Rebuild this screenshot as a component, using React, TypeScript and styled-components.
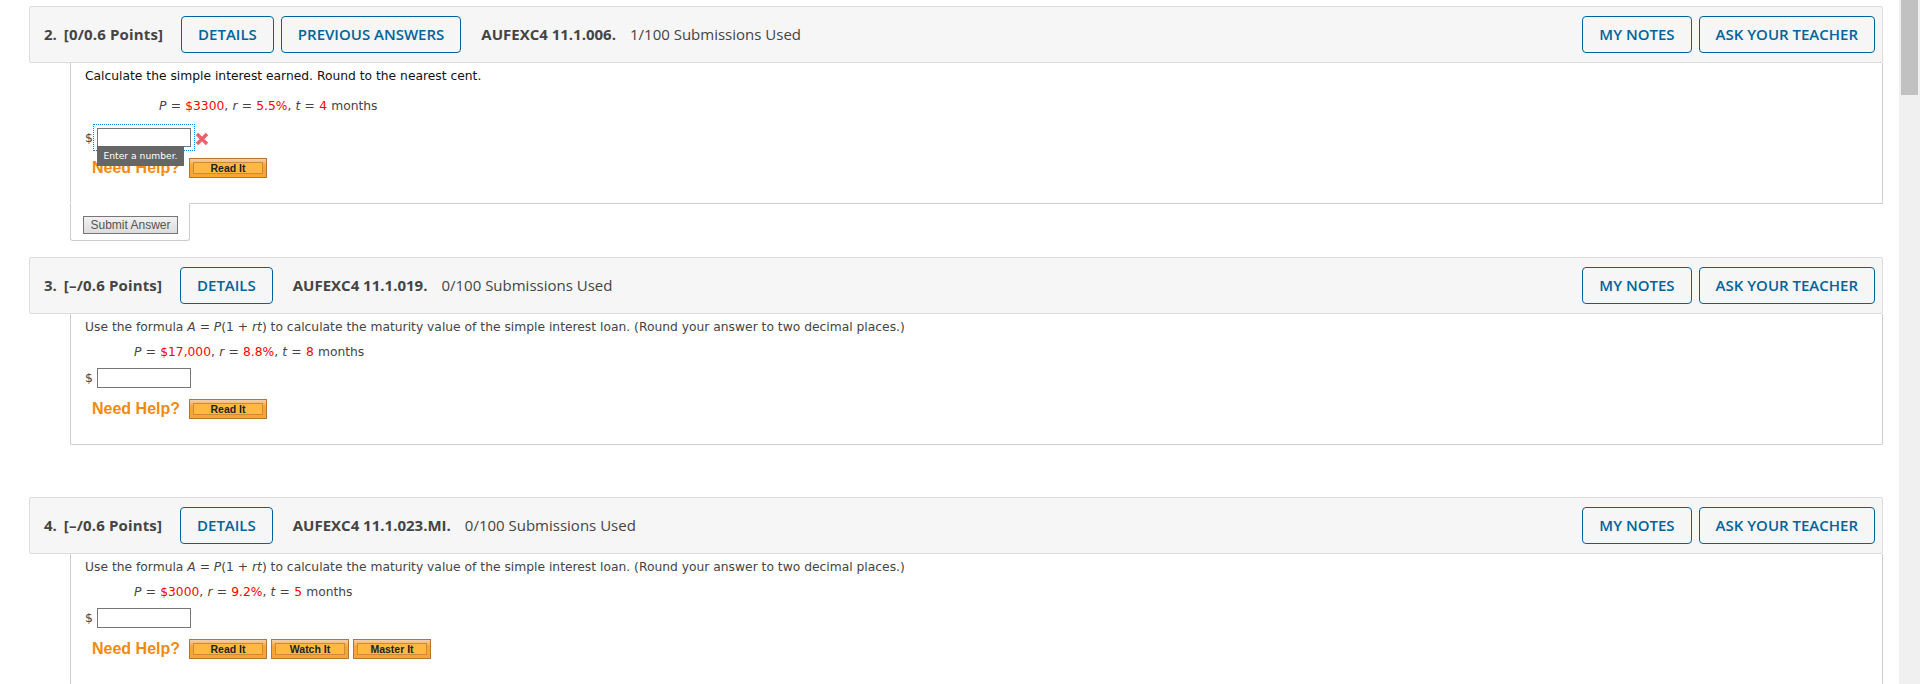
import styled, { createGlobalStyle } from "styled-components";

const GlobalStyle = createGlobalStyle`
  html, body {
    margin: 0;
    padding: 0;
    background: #fff;
    overflow: hidden;
  }
`;

const Page = styled.div`
  display: flex;
  height: 684px;
  overflow: hidden;
`;

const Main = styled.main`
  width: 1899px;
  padding: 6px 16px 0 29px;
  box-sizing: border-box;
`;

const Rail = styled.div`
  width: 21px;
  height: 684px;
  padding: 0 2px;
  box-sizing: border-box;
  background: #f0f0f0;
`;

const Thumb = styled.div`
  height: 95px;
  background: #c1c1c1;
`;

const Section = styled.section<{ $gap: number }>`
  margin-bottom: ${(p) => p.$gap}px;
`;

const Header = styled.header`
  display: flex;
  align-items: center;
  height: 57px;
  padding: 0 7px 0 14px;
  box-sizing: border-box;
  background: #f6f6f6;
  border: 1px solid #ddd;
  border-radius: 2px;
  font-family: "Open Sans", sans-serif;
  font-size: 15px;
  color: #444;
`;

const Num = styled.span`
  font-weight: 700;
  margin-right: 7px;
  padding-bottom: 2px;
`;

const Points = styled.span`
  font-weight: 700;
  margin-right: 8px;
  padding-bottom: 2px;
  letter-spacing: 0.15px;
`;

const HeadButton = styled.button`
  height: 37px;
  margin-left: 10px;
  padding: 0 16px 2px;
  background: transparent;
  border: 1px solid #00639c;
  border-radius: 4px;
  font-family: "Open Sans", sans-serif;
  font-size: 15px;
  font-weight: 600;
  color: #00639c;
  white-space: nowrap;

  & + & {
    margin-left: 7px;
  }
`;

const Code = styled.span`
  font-weight: 700;
  margin-left: 20px;
  padding-bottom: 2px;
`;

const Used = styled.span`
  margin-left: 14px;
  padding-bottom: 2px;
`;

const HeadRight = styled.div`
  display: flex;
  margin-left: auto;

  ${HeadButton} {
    margin-left: 0;
  }

  ${HeadButton} + ${HeadButton} {
    margin-left: 7px;
  }
`;

const Body = styled.div<{ $open: boolean }>`
  margin-left: 41px;
  padding: 5px 14px 25px;
  border: 1px solid #ccc;
  border-top: none;
  border-bottom: ${(p) => (p.$open ? "none" : "1px solid #ccc")};
  border-radius: 0 0 2px 2px;
  font-family: "DejaVu Sans", sans-serif;
  font-size: 12.3px;
  line-height: 16px;
  color: #444;
`;

const Prompt = styled.div<{ $dark: boolean }>`
  color: ${(p) => (p.$dark ? "#111" : "#444")};
`;

const Formula = styled.div<{ $compact: boolean }>`
  margin-top: ${(p) => (p.$compact ? 14 : 9)}px;
  padding-left: ${(p) => (p.$compact ? 74 : 49)}px;
  word-spacing: 0.3px;
`;

const Var = styled.i`
  font-style: italic;
`;

const Given = styled.span`
  color: #f00;
`;

const AnswerRow = styled.div<{ $compact: boolean }>`
  display: flex;
  align-items: center;
  margin-top: ${(p) => (p.$compact ? 14 : 8)}px;
`;

const Dollar = styled.span`
  width: 12px;
`;

const InputWrap = styled.div`
  position: relative;
  display: flex;
`;

const Input = styled.input<{ $focused: boolean; $compact: boolean }>`
  width: 94px;
  height: ${(p) => (p.$compact ? 19 : 20)}px;
  padding: 0;
  box-sizing: border-box;
  background: #fff;
  border: 1px solid #767676;
  outline: ${(p) => (p.$focused ? "1px dotted #0a84ff" : "none")};
  outline-offset: 3px;
`;

const Tooltip = styled.div`
  position: absolute;
  left: 0;
  top: 18px;
  width: 87px;
  height: 20px;
  background: #666;
  color: #fff;
  font-size: 9.2px;
  line-height: 19px;
  text-align: center;
  white-space: nowrap;
  z-index: 1;
`;

const Wrong = styled.svg`
  width: 14px;
  height: 14px;
  margin: 3px 0 0 4px;
`;

const HelpRow = styled.div`
  display: flex;
  align-items: center;
  margin-top: 11px;
  padding-left: 7px;
`;

const HelpLabel = styled.span`
  width: 97px;
  font-family: "Liberation Sans", Arial, sans-serif;
  font-size: 16px;
  font-weight: 700;
  line-height: 20px;
  color: #f08a12;
`;

const HelpButton = styled.button`
  display: flex;
  width: 78px;
  height: 20px;
  margin-right: 4px;
  padding: 3px;
  box-sizing: border-box;
  background: linear-gradient(#f3d0ac, #f8a437 35%);
  border: 1px solid #b8752d;
`;

const HelpFace = styled.span`
  flex: 1;
  background: #ffb942;
  border: 1px solid #cf8a35;
  font-family: "Liberation Sans", Arial, sans-serif;
  font-size: 10.5px;
  font-weight: 700;
  line-height: 11px;
  text-align: center;
  color: #222;
`;

const SubmitTab = styled.div`
  position: relative;
  width: 120px;
  height: 38px;
  margin: -1px 0 0 41px;
  padding-top: 12px;
  padding-left: 12px;
  box-sizing: border-box;
  background: #fff;
  border: 1px solid #ccc;
  border-top: 1px solid #fff;
  border-radius: 0 0 3px 3px;
`;

const BodyEdge = styled.div`
  height: 0;
  margin-left: 41px;
  border-bottom: 1px solid #ccc;
`;

const SubmitButton = styled.button`
  display: block;
  width: 95px;
  height: 18px;
  padding: 0;
  background: linear-gradient(#f2f2f2, #dcdcdc);
  border: 1px solid #777;
  font-family: "Liberation Sans", Arial, sans-serif;
  font-size: 12px;
  line-height: 15px;
  color: #555;
`;

type Question = {
  num: string;
  points: string;
  previous?: boolean;
  code: string;
  used: string;
  prompt: React.ReactNode;
  p: string;
  r: string;
  t: string;
  help: string[];
  submit?: boolean;
  gap: number;
};

const maturity = (
  <>
    Use the formula <Var>A</Var> = <Var>P</Var>(1 + <Var>rt</Var>) to calculate the maturity
    value of the simple interest loan. (Round your answer to two decimal places.)
  </>
);

const questions: Question[] = [
  {
    num: "2.",
    points: "[0/0.6 Points]",
    previous: true,
    code: "AUFEXC4 11.1.006.",
    used: "1/100 Submissions Used",
    prompt: "Calculate the simple interest earned. Round to the nearest cent.",
    p: "$3300",
    r: "5.5%",
    t: "4",
    help: ["Read It"],
    submit: true,
    gap: 16,
  },
  {
    num: "3.",
    points: "[–/0.6 Points]",
    code: "AUFEXC4 11.1.019.",
    used: "0/100 Submissions Used",
    prompt: maturity,
    p: "$17,000",
    r: "8.8%",
    t: "8",
    help: ["Read It"],
    gap: 52,
  },
  {
    num: "4.",
    points: "[–/0.6 Points]",
    code: "AUFEXC4 11.1.023.MI.",
    used: "0/100 Submissions Used",
    prompt: maturity,
    p: "$3000",
    r: "9.2%",
    t: "5",
    help: ["Read It", "Watch It", "Master It"],
    gap: 0,
  },
];

function QuestionBlock({ q }: { q: Question }) {
  const compact = !!q.submit;
  return (
    <Section $gap={q.gap}>
      <Header>
        <Num>{q.num}</Num>
        <Points>{q.points}</Points>
        <HeadButton>DETAILS</HeadButton>
        {q.previous && <HeadButton>PREVIOUS ANSWERS</HeadButton>}
        <Code>{q.code}</Code>
        <Used>{q.used}</Used>
        <HeadRight>
          <HeadButton>MY NOTES</HeadButton>
          <HeadButton>ASK YOUR TEACHER</HeadButton>
        </HeadRight>
      </Header>
      <Body $open={compact}>
        <Prompt $dark={compact}>{q.prompt}</Prompt>
        <Formula $compact={compact}>
          <Var>P</Var> = <Given>{q.p}</Given>, <Var>r</Var> = <Given>{q.r}</Given>, <Var>t</Var> ={" "}
          <Given>{q.t}</Given> months
        </Formula>
        <AnswerRow $compact={compact}>
          <Dollar>$</Dollar>
          <InputWrap>
            <Input $focused={compact} $compact={compact} />
            {compact && <Tooltip>Enter a number.</Tooltip>}
          </InputWrap>
          {compact && (
            <Wrong viewBox="0 0 14 14">
              <path d="M2 2l10 10M12 2L2 12" stroke="#f0606c" strokeWidth="3.4" />
            </Wrong>
          )}
        </AnswerRow>
        <HelpRow>
          <HelpLabel>Need Help?</HelpLabel>
          {q.help.map((label) => (
            <HelpButton key={label}>
              <HelpFace>{label}</HelpFace>
            </HelpButton>
          ))}
        </HelpRow>
      </Body>
      {q.submit && (
        <>
          <BodyEdge />
          <SubmitTab>
            <SubmitButton>Submit Answer</SubmitButton>
          </SubmitTab>
        </>
      )}
    </Section>
  );
}

export default function App() {
  return (
    <>
      <GlobalStyle />
      <Page>
        <Main>
          {questions.map((q) => (
            <QuestionBlock key={q.num} q={q} />
          ))}
        </Main>
        <Rail>
          <Thumb />
        </Rail>
      </Page>
    </>
  );
}
